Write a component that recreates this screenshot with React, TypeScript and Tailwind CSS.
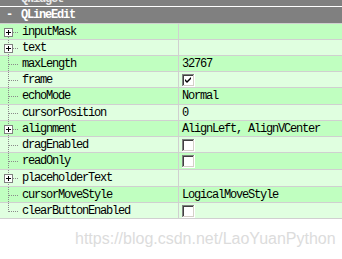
import React from "react";

type Row = {
  name: string;
  value?: string;
  check?: boolean | null;
  plus?: boolean;
  h: number;
  dark: boolean;
};

const rows: Row[] = [
  { name: "inputMask", plus: true, h: 16, dark: true },
  { name: "text", plus: true, h: 16, dark: false },
  { name: "maxLength", value: "32767", h: 16, dark: true },
  { name: "frame", check: true, h: 16, dark: false },
  { name: "echoMode", value: "Normal", h: 17, dark: true },
  { name: "cursorPosition", value: "0", h: 16, dark: false },
  { name: "alignment", value: "AlignLeft, AlignVCenter", plus: true, h: 16, dark: true },
  { name: "dragEnabled", check: false, h: 16, dark: false },
  { name: "readOnly", check: false, h: 17, dark: true },
  { name: "placeholderText", plus: true, h: 17, dark: false },
  { name: "cursorMoveStyle", value: "LogicalMoveStyle", h: 16, dark: true },
  { name: "clearButtonEnabled", check: false, h: 16, dark: false },
];

const mono = { fontFamily: '"Liberation Mono", "DejaVu Sans Mono", monospace' };

function Tree({ h, first, last, plus }: { h: number; first: boolean; last: boolean; plus?: boolean }) {
  const mid = 8.5;
  return (
    <svg width="20" height={h} className="shrink-0" shapeRendering="crispEdges">
      <line
        x1="8.5"
        y1={first ? mid : 0}
        x2="8.5"
        y2={last ? mid : h}
        stroke="#8a8a8a"
        strokeWidth="1"
        strokeDasharray="1 1"
      />
      <line x1="9" y1={mid} x2="19" y2={mid} stroke="#8a8a8a" strokeWidth="1" strokeDasharray="1 1" />
      {plus && (
        <g>
          <rect x="4.5" y="4.5" width="8" height="8" fill="#ffffff" stroke="#808080" strokeWidth="1" />
          <line x1="6" y1="8.5" x2="11" y2="8.5" stroke="#000" strokeWidth="1" />
          <line x1="8.5" y1="6" x2="8.5" y2="11" stroke="#000" strokeWidth="1" />
        </g>
      )}
    </svg>
  );
}

function Check({ on }: { on: boolean }) {
  return (
    <svg width="13" height="13" shapeRendering="crispEdges">
      <rect x="0" y="0" width="13" height="13" fill="#ffffff" />
      <line x1="0" y1="0.5" x2="12" y2="0.5" stroke="#808080" />
      <line x1="0.5" y1="0" x2="0.5" y2="12" stroke="#808080" />
      <line x1="1" y1="1.5" x2="11" y2="1.5" stroke="#404040" />
      <line x1="1.5" y1="1" x2="1.5" y2="11" stroke="#404040" />
      <line x1="0" y1="12.5" x2="13" y2="12.5" stroke="#ffffff" />
      <line x1="12.5" y1="0" x2="12.5" y2="13" stroke="#ffffff" />
      <line x1="1" y1="11.5" x2="12" y2="11.5" stroke="#d4d0c8" />
      <line x1="11.5" y1="1" x2="11.5" y2="12" stroke="#d4d0c8" />
      {on && (
        <path d="M3 5 L5 7 L9 3 L9 5 L5 9 L3 7 Z" fill="#000" shapeRendering="auto" />
      )}
    </svg>
  );
}

export default function App() {
  return (
    <div className="w-[342px] h-[259px] bg-white overflow-hidden" style={mono}>
      <div className="h-[6px] bg-[#808080] overflow-hidden">
        <div className="pl-[21px] -mt-[7px] text-[12px] leading-[12px] font-bold text-[#e8e8e8] tracking-[-1.2px]">
          QWidget
        </div>
      </div>
      <div className="h-px bg-white" />
      <div className="h-[17px] bg-[#808080] border-b border-[#d0d0d0] flex items-center text-white font-bold text-[12px] tracking-[-1.2px]">
        <span className="w-[21px] pl-[6px]">-</span>
        <span>QLineEdit</span>
      </div>
      {rows.map((r, i) => (
        <div
          key={r.name}
          className={`flex border-b border-[#d0d0d0] ${r.dark ? "bg-[#c0ffc0]" : "bg-[#e0ffe0]"}`}
          style={{ height: r.h }}
        >
          <div className="w-[178px] flex items-start shrink-0">
            <Tree h={r.h - 1} first={i === 0} last={i === rows.length - 1} plus={r.plus} />
            <span className="pl-[2px] pt-[1px] text-[12px] leading-[15px] text-black tracking-[-1.2px]">{r.name}</span>
          </div>
          <div className="w-px bg-[#d0d0d0]" />
          <div className="flex-1 pl-[3px] pt-[1px] flex items-center text-[12px] leading-[15px] text-black tracking-[-1.2px]">
            {r.value !== undefined && <span>{r.value}</span>}
            {r.check !== undefined && r.check !== null && (
              <div>
                <Check on={r.check} />
              </div>
            )}
          </div>
        </div>
      ))}
      <div
        className="pl-[75px] mt-[11px] text-[16px] leading-[18px] text-[#dcdcdc]"
        style={{ fontFamily: '"Liberation Sans", Arial, sans-serif' }}
      >
        https://blog.csdn.net/LaoYuanPython
      </div>
    </div>
  );
}
